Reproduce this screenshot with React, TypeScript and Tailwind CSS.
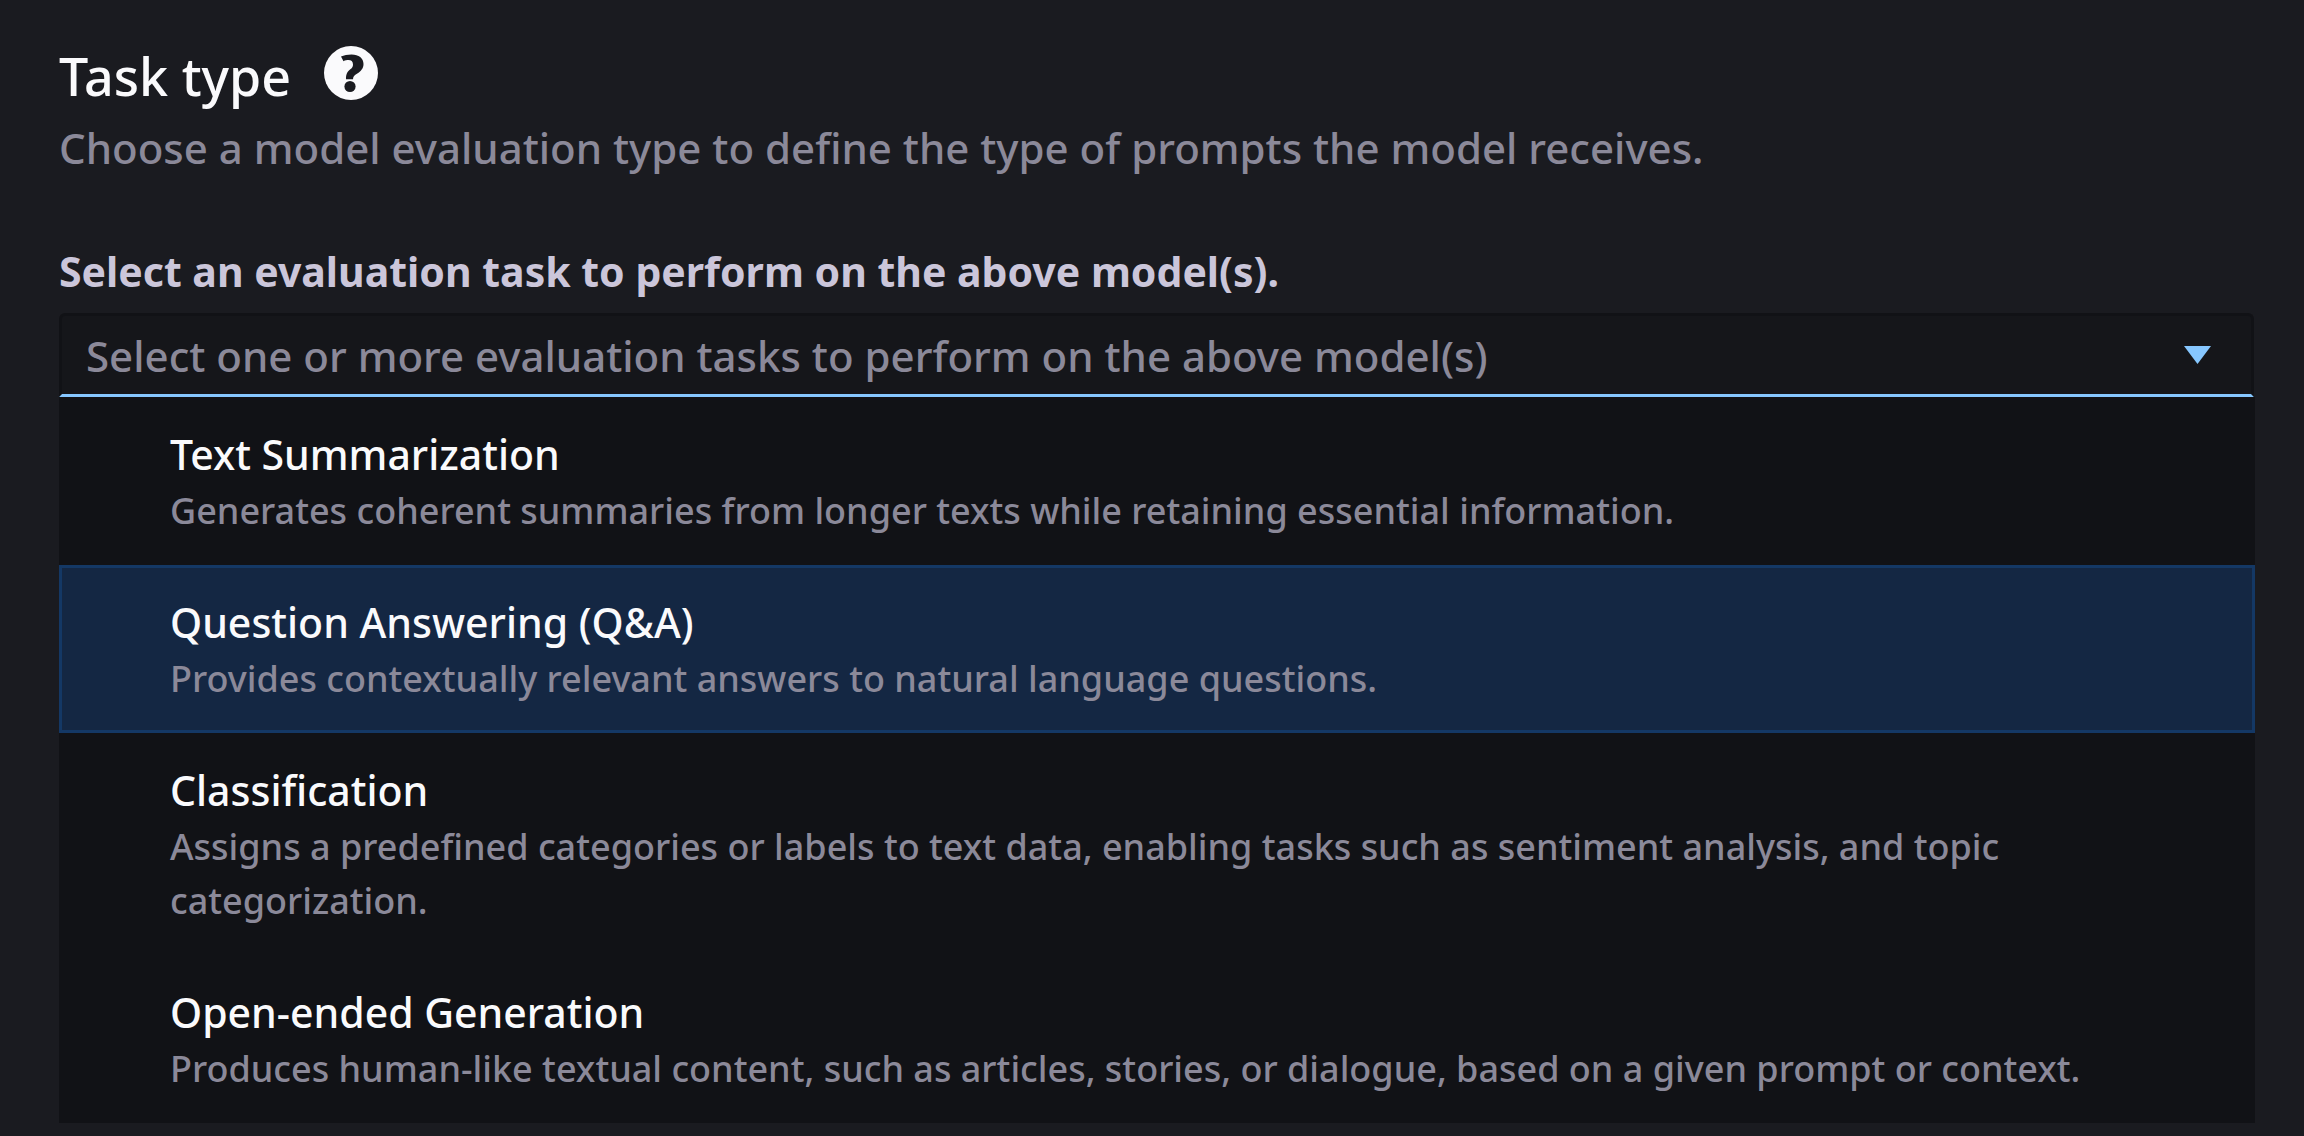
import React, { useState } from "react";

type Task = { id: string; title: string; description: string };

const TASKS: Task[] = [
    {
        id: "summarization",
        title: "Text Summarization",
        description: "Generates coherent summaries from longer texts while retaining essential information.",
    },
    {
        id: "qa",
        title: "Question Answering (Q&A)",
        description: "Provides contextually relevant answers to natural language questions.",
    },
    {
        id: "classification",
        title: "Classification",
        description:
            "Assigns a predefined categories or labels to text data, enabling tasks such as sentiment analysis, and topic categorization.",
    },
    {
        id: "generation",
        title: "Open-ended Generation",
        description:
            "Produces human-like textual content, such as articles, stories, or dialogue, based on a given prompt or context.",
    },
];

const HelpIcon = () => (
    <svg viewBox="0 0 54 54" className="h-[54px] w-[54px]" aria-hidden="true">
        <circle cx="27" cy="27" r="27" fill="#fafafc" />
        <path
            d="M17 10.5C20 9.2 23.5 8.4 27.5 8.4c7.3 0 12 3.6 12 9.6 0 4.6-2.7 7.2-6.2 9.6-3 2-4.3 3.1-4.3 5.6h-7c-.1-4.7 1-7.2 4.3-9.9 2.2-1.800 2.700-3 2.700-4.900 0-3-1.800-4.400-4.500-4.400-1.500 0-3.500.200-5 1.200z"
            fill="#1a1b20"
        />
        <circle cx="26" cy="40.5" r="5.6" fill="#1a1b20" />
    </svg>
);

export default function App() {
    const [selected, setSelected] = useState("");
    const [active, setActive] = useState("qa");

    return (
        <main className="min-h-screen bg-[#1a1b20] pt-10 pr-[49px] pb-3 pl-[59px] font-['Noto_Sans',sans-serif]">
            <header>
                <div className="flex items-center gap-[33px]">
                    <h1 className="text-[52px] leading-[72px] font-medium text-[#fafafc]">Task type</h1>
                    <button type="button" aria-label="Help" className="-mt-1.5 rounded-full">
                        <HelpIcon />
                    </button>
                </div>
                <p className="mt-1.5 text-[42px] leading-[60px] font-medium text-[#8b8999]">
                    Choose a model evaluation type to define the type of prompts the model receives.
                </p>
            </header>

            <section className="mt-[63px]">
                <label htmlFor="task" className="block text-[41px] leading-[60px] font-bold text-[#cbc6da]">
                    Select an evaluation task to perform on the above model(s).
                </label>

                <div className="relative mt-3 mr-px">
                    <select
                        id="task"
                        value={selected}
                        onChange={(e) => setSelected(e.target.value)}
                        className="block h-[84px] w-full appearance-none rounded-t-md border-3 border-[#111216] border-b-[#86c7ff] bg-[#15161a] pr-24 pl-6 text-[42px] font-medium text-[#8b8999] outline-none"
                    >
                        <option value="">Select one or more evaluation tasks to perform on the above model(s)</option>
                        {TASKS.map((task) => (
                            <option key={task.id} value={task.id}>
                                {task.title}
                            </option>
                        ))}
                    </select>
                    <svg
                        viewBox="0 0 27 18"
                        className="pointer-events-none absolute top-[33px] right-[43px] h-[18px] w-[27px]"
                        aria-hidden="true"
                    >
                        <path d="M0 0h27L13.5 18z" fill="#86c7ff" />
                    </svg>
                </div>

                <ul className="bg-[#111216]">
                    {TASKS.map((task) => (
                        <li key={task.id}>
                            <button
                                type="button"
                                onMouseEnter={() => setActive(task.id)}
                                onClick={() => setSelected(task.id)}
                                className={`block w-full border-3 py-6 pr-[108px] pl-[108px] text-left ${
                                    active === task.id
                                        ? "border-[#143865] bg-[#142743]"
                                        : "border-transparent"
                                }`}
                            >
                                <span className="block text-[41px] leading-[60px] font-medium text-[#fafafc]">
                                    {task.title}
                                </span>
                                <span className="block text-[36px] leading-[54px] font-medium text-[#8b8999]">
                                    {task.description}
                                </span>
                            </button>
                        </li>
                    ))}
                </ul>
            </section>
        </main>
    );
}
